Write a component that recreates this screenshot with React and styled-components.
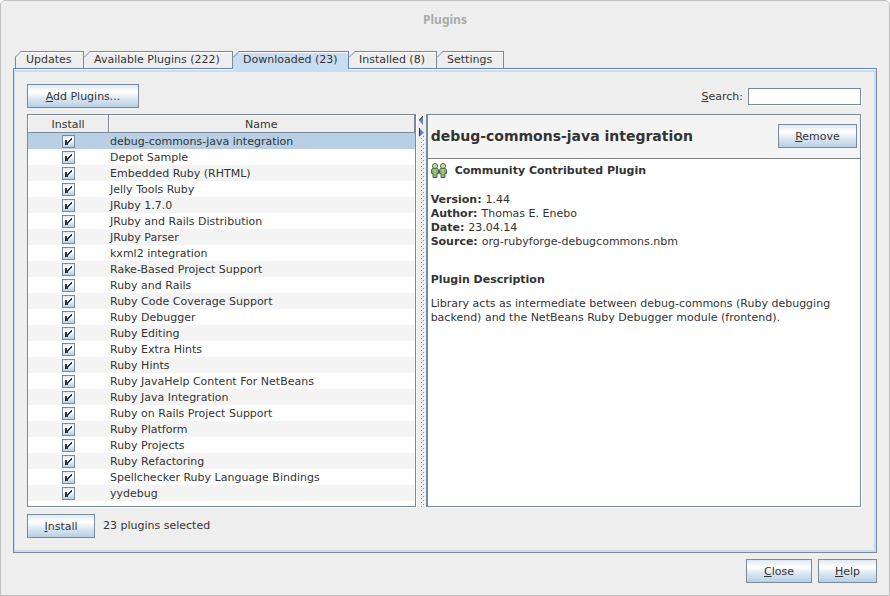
import React, { useState } from "react";
import styled, { createGlobalStyle } from "styled-components";

const color = {
  bg: "#eeeeee",
  edge: "#7a8a99",
  blue: "#6382bf",
  light: "#c8ddf2",
  selection: "#b8cfe5",
  text: "#333333",
};

const buttonFace =
  "linear-gradient(to bottom, #dde8f3 0%, #ffffff 30%, #ffffff 34%, #dde8f3 60%, #b8cfe5 100%)";

const GlobalStyle = createGlobalStyle`
  *, *::before, *::after { box-sizing: border-box; }
  html, body, #root { height: 100%; }
  body { margin: 0; background: #ffffff; }
  body, button, input {
    font: 11px/14px "DejaVu Sans", Verdana, sans-serif;
    color: ${color.text};
  }
`;

const Dialog = styled.div`
  height: 100%;
  display: flex;
  flex-direction: column;
  padding: 0 12px 12px;
  background: ${color.bg};
  border: 1px solid #bfbfbf;
  border-radius: 5px 5px 0 0;
`;

const TitleBar = styled.h1`
  margin: 0;
  height: 50px;
  padding-top: 10px;
  text-align: center;
  font: bold 12px/18px "Noto Sans", "Open Sans", sans-serif;
  color: #a9aba7;
`;

const TabList = styled.div`
  display: flex;
  height: 17px;
  padding-left: 2px;
`;

const TabButton = styled.button`
  position: relative;
  height: ${(p) => (p.$active ? 21 : 17)}px;
  width: ${(p) => p.$width}px;
  flex: none;
  z-index: ${(p) => (p.$active ? 1 : 0)};
  padding: 0 0 ${(p) => (p.$active ? 4 : 0)}px 10px;
  text-align: left;
  white-space: nowrap;
  background: ${(p) => (p.$active ? color.light : color.bg)};
  border: 0 solid ${color.edge};
  border-top-width: 1px;
  border-left-width: ${(p) => (p.$first ? 1 : 0)}px;
  box-shadow: inset -1px 0 ${(p) => (p.$active ? color.blue : color.edge)}, inset 0 1px #ffffff;
  border-top-color: ${(p) => (p.$active ? color.blue : color.edge)};
  ${(p) => p.$active && `
    box-shadow: inset 0 1px #ffffff;
    &::after {
      content: "";
      position: absolute;
      right: 0;
      top: 0;
      width: 1px;
      height: 17px;
      background: ${color.blue};
    }
  `}
`;

const CornerSvg = styled.svg`
  position: absolute;
  left: ${(p) => (p.$first ? -1 : 0)}px;
  top: -1px;
`;

const Panel = styled.main`
  flex: 1;
  min-height: 0;
  display: flex;
  flex-direction: column;
  padding: 13px 13px 14px 12px;
  border: 1px solid ${color.edge};
  border-top-color: ${color.blue};
  border-left-color: ${color.blue};
  box-shadow: inset 0 1px #ffffff, inset 0 3px ${color.light}, inset 1px 0 ${color.light},
    inset -2px -2px ${color.light};
`;

const Toolbar = styled.div`
  display: flex;
  align-items: center;
  justify-content: space-between;
  padding: 2px 2px 0 1px;
  height: 26px;
`;

const PushButton = styled.button`
  height: 24px;
  width: ${(p) => p.$width}px;
  flex: none;
  padding: 2px 0 0;
  border: 1px solid ${color.edge};
  background: ${buttonFace};
`;

const Search = styled.label`
  display: flex;
  align-items: center;
  gap: 5px;
  span { padding-top: 2px; }
`;

const SearchInput = styled.input`
  width: 113px;
  height: 17px;
  padding: 0 2px;
  border: 1px solid ${color.edge};
  border-radius: 0;
  background: #ffffff;
  box-shadow: 1px 1px #ffffff;
  outline: none;
`;

const Split = styled.div`
  flex: 1;
  min-height: 0;
  display: flex;
  margin: 6px 2px 7px 1px;
`;

const ListPane = styled.div`
  flex: 389 1 0;
  min-width: 0;
  overflow: hidden;
  background: #ffffff;
  border: 1px solid ${color.edge};
  box-shadow: 1px 1px #ffffff;
`;

const PluginTable = styled.table`
  width: 100%;
  table-layout: fixed;
  border-collapse: separate;
  border-spacing: 0;
`;

const HeadCell = styled.th`
  width: ${(p) => (p.$narrow ? "81px" : "auto")};
  height: 18px;
  padding: 2px 0 0;
  font-weight: normal;
  background: ${color.bg};
  border-right: 1px solid ${color.edge};
  border-bottom: 1px solid ${color.edge};
  box-shadow: inset 1px 1px #ffffff;
`;

const Row = styled.tr`
  height: 16px;
  background: ${(p) => (p.$selected ? color.selection : "#ffffff")};
  &:nth-child(odd) {
    background: ${(p) => (p.$selected ? color.selection : "#f4f4f4")};
  }
`;

const CheckCell = styled.td`
  padding: 0;
  text-align: center;
  line-height: 0;
`;

const NameCell = styled.td`
  padding: 2px 0 0 1px;
  white-space: nowrap;
`;

const Check = styled.input`
  appearance: none;
  display: inline-block;
  vertical-align: top;
  width: 13px;
  height: 13px;
  margin: 1px 0 0;
  border: 1px solid ${color.edge};
  background: ${buttonFace};
  &:checked {
    background:
      url("data:image/svg+xml,%3Csvg xmlns='http://www.w3.org/2000/svg' width='11' height='11' shape-rendering='crispEdges'%3E%3Cpath fill='%23333' d='M2 4h2v5H2zM4 6h1v2H4zM5 5h1v2H5zM6 4h1v2H6zM7 3h1v2H7zM8 2h1v2H8zM4 8h1v1H4z'/%3E%3C/svg%3E"),
      linear-gradient(to bottom, #dde8f3, #ffffff 30%, #b8cfe5);
  }
`;

const Divider = styled.div`
  width: 10px;
  flex: none;
  padding: 2px 0 0 2px;
  border-left: 1px solid #ffffff;
`;

const Dots = styled.svg`
  display: block;
  width: 7px;
  height: 100%;
`;

const DetailPane = styled.section`
  flex: 435 1 0;
  min-width: 0;
  background: #ffffff;
  border: 1px solid ${color.edge};
  border-left-width: 2px;
  box-shadow: 1px 1px #ffffff;
`;

const DetailHeader = styled.header`
  display: flex;
  align-items: center;
  justify-content: space-between;
  height: 44px;
  padding: 0 3px 2px;
  background: #f4f4f4;
  border-bottom: 1px solid #808080;
`;

const DetailTitle = styled.h2`
  margin: 0;
  font-size: 14px;
  line-height: 18px;
`;

const Community = styled.div`
  display: flex;
  gap: 8px;
  align-items: center;
  height: 16px;
  margin: 4px 0 14px 3px;
  font-weight: bold;
`;

const Facts = styled.dl`
  margin: 0 0 24px 3px;
  div { display: flex; gap: 4px; }
  dt { font-weight: bold; }
  dd { margin: 0; }
`;

const SectionTitle = styled.h3`
  margin: 0 0 10px 3px;
  font-size: 11px;
  line-height: 14px;
`;

const Description = styled.p`
  margin: 0 3px;
`;

const StatusRow = styled.div`
  display: flex;
  align-items: center;
  gap: 8px;
  padding-left: 1px;
`;

const Footer = styled.footer`
  display: flex;
  justify-content: flex-end;
  gap: 6px;
  padding-top: 6px;
`;

const tabs = [
  { label: "Updates", width: 69 },
  { label: "Available Plugins (222)", width: 149 },
  { label: "Downloaded (23)", width: 116 },
  { label: "Installed (8)", width: 88 },
  { label: "Settings", width: 67 },
];

const plugins = [
  "debug-commons-java integration",
  "Depot Sample",
  "Embedded Ruby (RHTML)",
  "Jelly Tools Ruby",
  "JRuby 1.7.0",
  "JRuby and Rails Distribution",
  "JRuby Parser",
  "kxml2 integration",
  "Rake-Based Project Support",
  "Ruby and Rails",
  "Ruby Code Coverage Support",
  "Ruby Debugger",
  "Ruby Editing",
  "Ruby Extra Hints",
  "Ruby Hints",
  "Ruby JavaHelp Content For NetBeans",
  "Ruby Java Integration",
  "Ruby on Rails Project Support",
  "Ruby Platform",
  "Ruby Projects",
  "Ruby Refactoring",
  "Spellchecker Ruby Language Bindings",
  "yydebug",
];

const facts = [
  ["Version:", "1.44"],
  ["Author:", "Thomas E. Enebo"],
  ["Date:", "23.04.14"],
  ["Source:", "org-rubyforge-debugcommons.nbm"],
];

function Mnemonic({ text }) {
  return (
    <>
      <u>{text[0]}</u>
      {text.slice(1)}
    </>
  );
}

function Tab({ label, width, active, first, onSelect }) {
  return (
    <TabButton type="button" role="tab" aria-selected={active} $active={active} $first={first} $width={width} onClick={onSelect}>
      <CornerSvg $first={first} width="7" height="7" aria-hidden="true">
        <path d="M0 0H6L0 6Z" fill={color.bg} />
        <path d="M0 6.500L6.500 0" stroke={active ? color.blue : color.edge} fill="none" />
      </CornerSvg>
      {label}
    </TabButton>
  );
}

function SplitDivider() {
  return (
    <Divider role="separator" aria-orientation="vertical">
      <Dots aria-hidden="true">
        <defs>
          <pattern id="bumps" width="4" height="4" patternUnits="userSpaceOnUse">
            <path d="M1 1h1v1H1zM3 3h1v1H3z" fill="#ffffff" />
            <path d="M2 2h1v1H2zM0 0h1v1H0z" fill={color.edge} />
          </pattern>
        </defs>
        <rect x="2" y="20" width="4" height="100%" fill="url(#bumps)" />
        <path d="M4 0V9L0 4.500Z" fill={color.blue} />
        <path d="M4 0L0 4.500" stroke="#333" fill="none" />
        <path d="M0 12V21L5 16.500Z" fill={color.blue} />
        <path d="M0.500 12V20" stroke="#333" fill="none" />
      </Dots>
    </Divider>
  );
}

function Person({ x }) {
  return (
    <g transform={`translate(${x} 0)`} stroke="#48693a">
      <path d="M1.500 5.500H6.500L7.500 7V10.500H6V14.500H2V10.500H0.500V7Z" fill="#a5c78f" />
      <path d="M2 7V11M6 7V11M4 11V14" strokeOpacity="0.600" />
      <circle cx="4" cy="3" r="2.500" fill="#c6dfb5" />
    </g>
  );
}

export default function App() {
  const [active, setActive] = useState(2);
  const [selected, setSelected] = useState(0);
  return (
    <>
      <GlobalStyle />
      <Dialog>
        <TitleBar>Plugins</TitleBar>
        <TabList role="tablist">
          {tabs.map((t, i) => (
            <Tab key={t.label} {...t} first={i === 0} active={i === active} onSelect={() => setActive(i)} />
          ))}
        </TabList>
        <Panel>
          <Toolbar>
            <PushButton type="button" $width={112}><Mnemonic text="Add Plugins..." /></PushButton>
            <Search>
              <span><Mnemonic text="Search:" /></span>
              <SearchInput type="text" />
            </Search>
          </Toolbar>
          <Split>
            <ListPane>
              <PluginTable>
                <thead>
                  <tr>
                    <HeadCell $narrow>Install</HeadCell>
                    <HeadCell>Name</HeadCell>
                  </tr>
                </thead>
                <tbody>
                  {plugins.map((name, i) => (
                    <Row key={name} $selected={i === selected} onClick={() => setSelected(i)}>
                      <CheckCell><Check type="checkbox" defaultChecked aria-labelledby={`plugin-${i}`} /></CheckCell>
                      <NameCell id={`plugin-${i}`}>{name}</NameCell>
                    </Row>
                  ))}
                </tbody>
              </PluginTable>
            </ListPane>
            <SplitDivider />
            <DetailPane>
              <DetailHeader>
                <DetailTitle>debug-commons-java integration</DetailTitle>
                <PushButton type="button" $width={79}><Mnemonic text="Remove" /></PushButton>
              </DetailHeader>
              <Community>
                <svg width="16" height="16" aria-hidden="true">
                  <Person x={0} />
                  <Person x={8} />
                </svg>
                Community Contributed Plugin
              </Community>
              <Facts>
                {facts.map(([term, value]) => (
                  <div key={term}><dt>{term}</dt><dd>{value}</dd></div>
                ))}
              </Facts>
              <SectionTitle>Plugin Description</SectionTitle>
              <Description>
                Library acts as intermediate between debug-commons (Ruby debugging backend) and the NetBeans Ruby
                Debugger module (frontend).
              </Description>
            </DetailPane>
          </Split>
          <StatusRow>
            <PushButton type="button" $width={68}><Mnemonic text="Install" /></PushButton>
            <span>23 plugins selected</span>
          </StatusRow>
        </Panel>
        <Footer>
          <PushButton type="button" $width={66}><Mnemonic text="Close" /></PushButton>
          <PushButton type="button" $width={59}><Mnemonic text="Help" /></PushButton>
        </Footer>
      </Dialog>
    </>
  );
}
